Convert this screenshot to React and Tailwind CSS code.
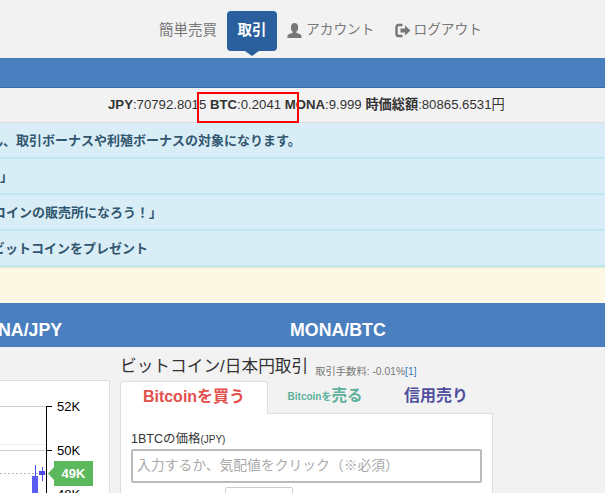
const jp = 'font-["Liberation_Sans","Noto_Sans_CJK_JP",sans-serif]';

const alerts = [
    { text: 'ん、取引ボーナスや利殖ボーナスの対象になります。', shift: '-ml-[10px]' },
    { text: '」', shift: 'ml-0' },
    { text: 'コインの販売所になろう！」', shift: '-ml-[7px]' },
    { text: 'ビットコインをプレゼント', shift: '-ml-[8px]' },
];

const UserIcon = () => (
    <svg width="15" height="15" viewBox="0 0 15 15" fill="#777" className="mr-[4px]">
        <ellipse cx="7.5" cy="4.5" rx="3.6" ry="4.5" />
        <path d="M5.5 8.5 L5.5 10 C3 10.6 1 11.4 0.5 12.6 L0.5 15 L14.5 15 L14.5 12.6 C14 11.4 12 10.6 9.5 10 L9.5 8.5 Z" />
    </svg>
);

const LogoutIcon = () => (
    <svg width="16" height="15" viewBox="0 0 16 15" fill="none" className="mr-[2px]">
        <path d="M7.5 2 L3.5 2 Q1.5 2 1.5 4 L1.5 11 Q1.5 13 3.5 13 L7.5 13" stroke="#777" strokeWidth="2.4" />
        <path d="M5.5 5.5 L10 5.5 L10 2.5 L15.5 7.5 L10 12.5 L10 9.5 L5.5 9.5 Z" fill="#777" />
    </svg>
);

const Chart = () => (
    <svg width="109" height="113" viewBox="0 0 109 113" className="block">
        <line x1="0" y1="25.5" x2="46" y2="25.5" stroke="#ccc" />
        <line x1="0" y1="63.5" x2="46" y2="63.5" stroke="#eee" />
        <line x1="0" y1="69.5" x2="46" y2="69.5" stroke="#ccc" />
        <line x1="0" y1="92.5" x2="48" y2="92.5" stroke="#bbb" strokeDasharray="2 2" />
        <line x1="46.5" y1="25" x2="46.5" y2="113" stroke="#000" />
        <line x1="47" y1="25.5" x2="52" y2="25.5" stroke="#000" />
        <line x1="47" y1="69.5" x2="52" y2="69.5" stroke="#000" />
        <line x1="35.5" y1="84" x2="35.5" y2="113" stroke="#4b4bf0" />
        <rect x="32" y="95" width="6" height="18" fill="#5a5af5" />
        <line x1="42.5" y1="86" x2="42.5" y2="100" stroke="#4b4bf0" />
        <rect x="39" y="90" width="6" height="4" fill="#4b4bf0" />
        <polygon points="48,92.5 54,86 54,99" fill="#5cb85c" />
    </svg>
);

export default function App() {
    return (
        <div className={`h-[493px] w-[605px] overflow-hidden bg-[#f2f2f2] text-[#333] ${jp}`}>
            <nav className="flex h-[58px] items-start pl-[159px] pt-[11px] text-[14.5px] text-[#777]">
                <span className="mt-[9px] leading-5">簡単売買</span>
                <div className="relative ml-[10px] flex h-[40px] w-[50px] items-center justify-center rounded bg-[#2a5f9e] font-bold text-white">
                    取引
                    <span className="absolute left-[18px] top-[40px] h-0 w-0 border-x-[7px] border-t-[5px] border-x-transparent border-t-[#2a5f9e]" />
                </div>
                <span className="ml-[10px] mt-[9px] flex items-center text-[13.7px] leading-5">
                    <UserIcon />
                    アカウント
                </span>
                <span className="ml-[21px] mt-[9px] flex items-center text-[13.7px] leading-5">
                    <LogoutIcon />
                    ログアウト
                </span>
            </nav>
            <div className="h-[30px] border-b border-[#3a6ea8] bg-[#4a7fbf]" />
            <div className="relative flex h-[35px] items-center whitespace-nowrap border-b border-[#ddd] pl-[108px] text-[13.2px] leading-none">
                <span><b>JPY</b>:70792.8015 <b>BTC</b>:0.2041 <b>MONA</b>:9.999 <b>時価総額</b>:80865.6531円</span>
                <span className="absolute left-[197px] top-[4px] h-[31px] w-[102px] border-[2px] border-[#f00]" />
            </div>
            {alerts.map((a, i) => (
                <div key={i} className="flex h-[36px] items-center overflow-hidden whitespace-nowrap border-b-2 border-[#bce8f1] bg-[#d9edf7] pt-[2px] text-[13px] font-bold text-[#31566f]">
                    <span className={a.shift}>{a.text}</span>
                </div>
            ))}
            <div className="h-[36px] border-t border-[#e6e6cf] bg-[#fcf8e3]" />
            <div className="relative h-[44px] bg-[#4a7fbf] text-[17.8px] font-bold leading-[55px] text-white">
                <span className="absolute left-[-2px]">NA/JPY</span>
                <span className="absolute left-[290px]">MONA/BTC</span>
            </div>
            <div className="flex">
                <div className="mt-[33px] h-[113px] w-[110px] shrink-0 border-r border-t border-[#ddd] bg-white">
                    <div className="relative">
                        <Chart />
                        <span className="absolute left-[57px] top-[16px] text-[13px] text-black">52K</span>
                        <span className="absolute left-[57px] top-[60px] text-[13px] text-black">50K</span>
                        <span className="absolute left-[54px] top-[80px] flex h-[25px] w-[39px] items-center justify-center bg-[#5cb85c] text-[13px] font-bold text-white">49K</span>
                        <span className="absolute left-[57px] top-[104px] text-[13px] text-black">48K</span>
                    </div>
                </div>
                <div className="ml-[10px] w-[373px]">
                    <div className="flex h-[34px] items-end whitespace-nowrap pb-[2px] text-[#333]">
                        <span className="text-[16.7px] leading-6">ビットコイン/日本円取引</span>
                        <span className="ml-[7px] text-[10.3px] text-[#777]">
                            取引手数料: -0.01%<span className="text-[#337ab7]">[1]</span>
                        </span>
                    </div>
                    <div className="flex h-[33px] items-end border-b border-[#ddd]">
                        <div className="-mb-px flex h-[33px] w-[148px] items-center justify-center rounded-t border border-b-0 border-[#ddd] bg-white pb-[2px] text-[16px] font-bold text-[#e2504c]">
                            Bitcoinを買う
                        </div>
                        <div className="flex h-[32px] w-[114px] items-center justify-center pb-[2px] font-bold text-[#5cb09a]">
                            <span className="text-[10px]">Bitcoinを</span>
                            <span className="text-[15.5px]">売る</span>
                        </div>
                        <div className="flex h-[32px] w-[108px] items-center justify-center pb-[2px] text-[16px] font-bold text-[#50509f]">信用売り</div>
                    </div>
                    <div className="h-[100px] border-x border-[#ddd] bg-white px-[10px] pt-[17px]">
                        <div className="text-[12.5px] leading-[17px]">
                            1BTCの価格<span className="text-[10px]">(JPY)</span>
                        </div>
                        <div className="mt-[1px] flex h-[34px] items-center rounded-[2px] border-2 border-[#bbb] px-[4px] text-[13.8px] text-[#aaa]">
                            入力するか、気配値をクリック（※必須）
                        </div>
                        <div className="ml-[94px] mt-[4px] h-[20px] w-[68px] rounded-[2px] border border-[#ccc]" />
                    </div>
                </div>
            </div>
        </div>
    );
}
